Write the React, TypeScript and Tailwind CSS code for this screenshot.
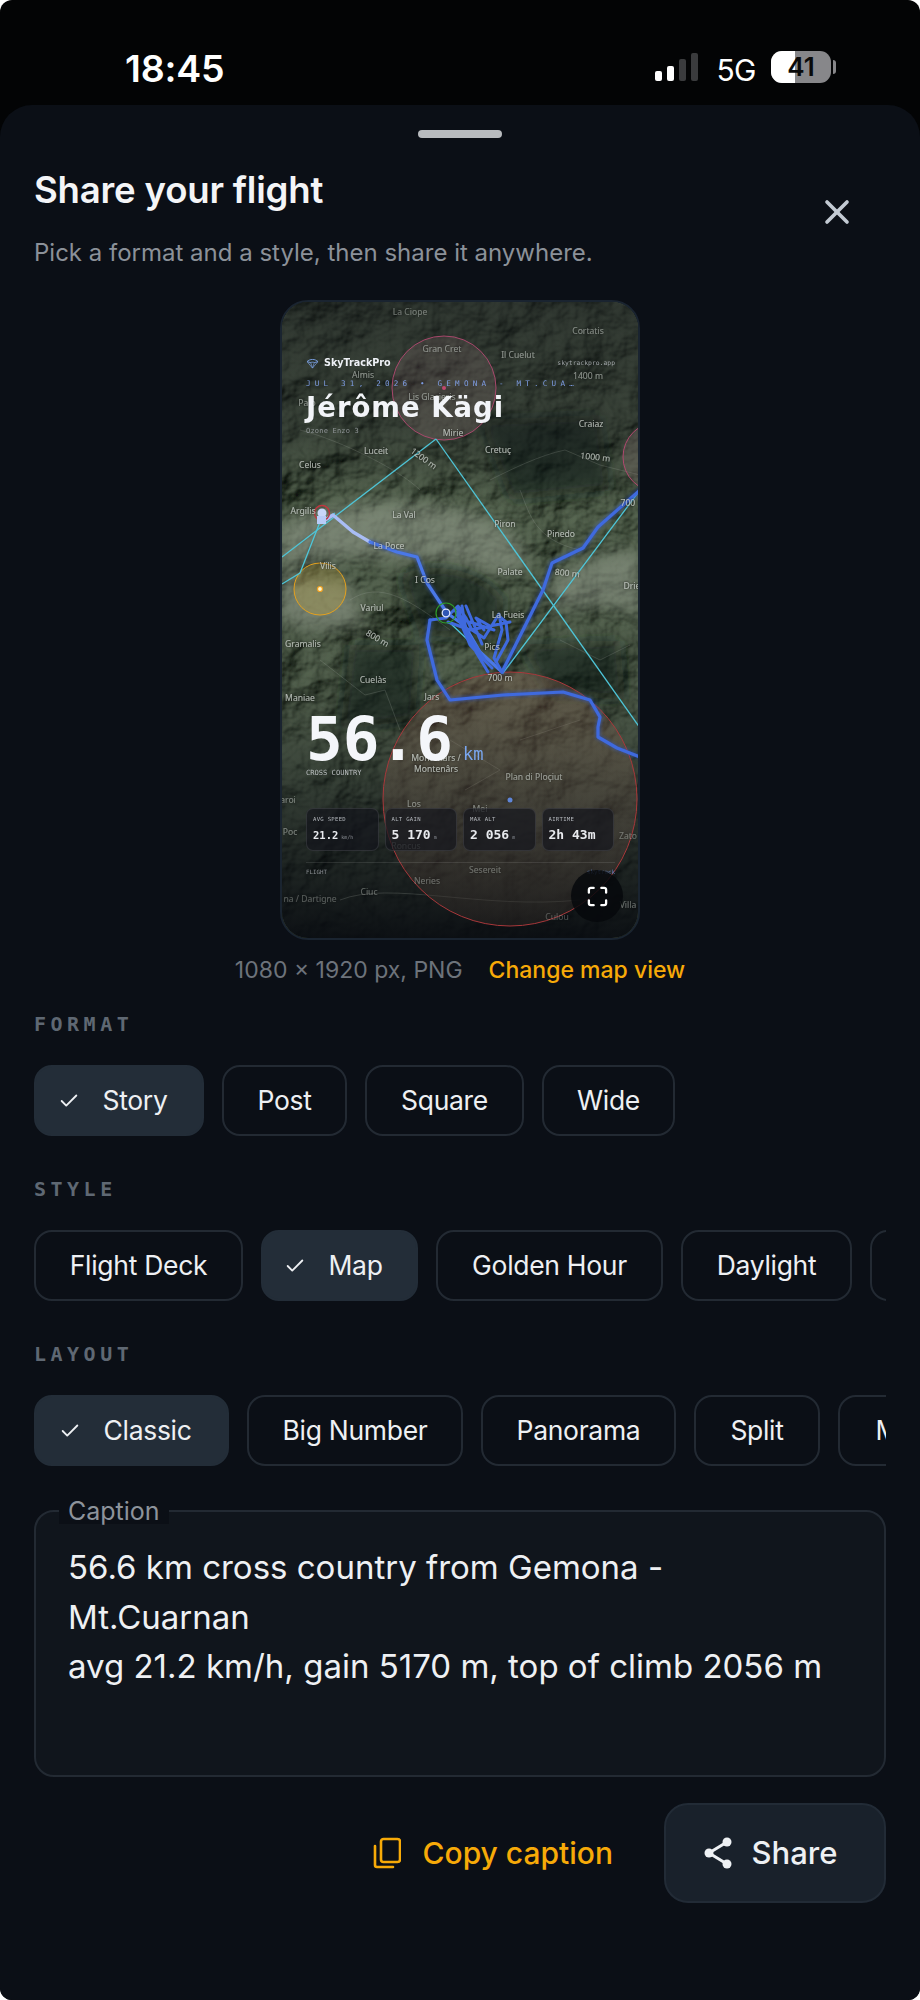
import { Check, Maximize, X } from "lucide-react";

const SANS = "font-['Inter','Liberation_Sans',sans-serif]";
const MONO = "font-['DejaVu_Sans_Mono','Liberation_Mono',monospace]";

type Label = { t: string; x: number; y: number; r?: number; o?: number };

// place names on the map preview (coords in the 360x640 map)
const labels: Label[] = [
  { t: "La Ciope", x: 130, y: 15, o: 0.45 },
  { t: "Cortatis", x: 308, y: 34, o: 0.55 },
  { t: "Gran Cret", x: 162, y: 52, o: 0.55 },
  { t: "Il Cuelut", x: 238, y: 58, o: 0.6 },
  { t: "Almis", x: 83, y: 78, o: 0.6 },
  { t: "1400 m", x: 308, y: 79, o: 0.6 },
  { t: "Palo", x: 27, y: 106, o: 0.6 },
  { t: "Lis Glacieris", x: 152, y: 100, o: 0.6 },
  { t: "Mirie", x: 173, y: 136 },
  { t: "Craiaz", x: 311, y: 127 },
  { t: "Luceit", x: 96, y: 154 },
  { t: "1200 m", x: 142, y: 161, r: 36 },
  { t: "Cretuç", x: 218, y: 153 },
  { t: "1000 m", x: 315, y: 160, r: 6 },
  { t: "Celus", x: 30, y: 168 },
  { t: "Argilis", x: 23, y: 214 },
  { t: "La Val", x: 124, y: 218 },
  { t: "Piron", x: 225, y: 227 },
  { t: "Pinedo", x: 281, y: 237 },
  { t: "La Poce", x: 109, y: 249 },
  { t: "Palate", x: 230, y: 275 },
  { t: "800 m", x: 287, y: 276, r: 6 },
  { t: "I Cos", x: 145, y: 283 },
  { t: "Vilis", x: 48, y: 269 },
  { t: "Varìul", x: 92, y: 311 },
  { t: "La Fueis", x: 228, y: 318 },
  { t: "Drie", x: 352, y: 289 },
  { t: "700 m", x: 353, y: 206 },
  { t: "Gramalis", x: 23, y: 347 },
  { t: "800 m", x: 96, y: 341, r: 30 },
  { t: "Pics", x: 212, y: 350 },
  { t: "Cuelàs", x: 93, y: 383 },
  { t: "Maniae", x: 20, y: 401 },
  { t: "Jars", x: 152, y: 400 },
  { t: "700 m", x: 220, y: 381 },
  { t: "Montenârs /", x: 156, y: 461 },
  { t: "Montenârs", x: 156, y: 472 },
  { t: "Plan di Ploçiut", x: 254, y: 480, o: 0.65 },
  { t: "Los", x: 134, y: 507, o: 0.55 },
  { t: "Mei", x: 200, y: 512, o: 0.55 },
  { t: "Poc", x: 10, y: 535, o: 0.5 },
  { t: "Roncus", x: 126, y: 549, o: 0.4 },
  { t: "Sesereit", x: 205, y: 573, o: 0.4 },
  { t: "Neries", x: 147, y: 584, o: 0.4 },
  { t: "Ciuc", x: 89, y: 595, o: 0.4 },
  { t: "na / Dartigne", x: 30, y: 602, o: 0.35 },
  { t: "Culou", x: 277, y: 620, o: 0.3 },
  { t: "Villa", x: 348, y: 608, o: 0.45 },
  { t: "Zato", x: 348, y: 539, o: 0.4 },
  { t: "aroi", x: 8, y: 503, o: 0.5 },
];

function MapDrawing() {
  return (
    <svg viewBox="0 0 360 640" className="block h-full w-full" aria-hidden="true">
      <defs>
        <filter id="hills" x="0" y="0" width="100%" height="100%">
          <feTurbulence type="fractalNoise" baseFrequency="0.013 0.015" numOctaves="5" seed="23" />
          <feDiffuseLighting surfaceScale="17" diffuseConstant="1.05" lightingColor="#98a291">
            <feDistantLight azimuth="225" elevation="50" />
          </feDiffuseLighting>
          <feComponentTransfer>
            <feFuncR type="gamma" exponent="1.7" amplitude="1" />
            <feFuncG type="gamma" exponent="1.6" amplitude="1" />
            <feFuncB type="gamma" exponent="1.7" amplitude="1" />
          </feComponentTransfer>
        </filter>
        <filter id="soft">
          <feGaussianBlur stdDeviation="8" />
        </filter>
        <filter id="glow">
          <feGaussianBlur stdDeviation="1.4" />
        </filter>
        <filter id="halo">
          <feDropShadow dx="0" dy="0" stdDeviation="0.8" floodColor="#111" floodOpacity="0.95" />
        </filter>
        <linearGradient id="shade" x1="0" y1="0" x2="0" y2="1">
          <stop offset="0" stopColor="#14161a" stopOpacity="0.62" />
          <stop offset="0.2" stopColor="#14161a" stopOpacity="0.48" />
          <stop offset="0.32" stopColor="#14161a" stopOpacity="0.12" />
          <stop offset="0.6" stopColor="#14161a" stopOpacity="0.18" />
          <stop offset="0.78" stopColor="#0c0f14" stopOpacity="0.55" />
          <stop offset="1" stopColor="#090c11" stopOpacity="0.96" />
        </linearGradient>
        <linearGradient id="zone" x1="0" y1="0" x2="0" y2="1">
          <stop offset="0" stopColor="#7a5a4c" stopOpacity="0.42" />
          <stop offset="0.55" stopColor="#6a564a" stopOpacity="0.34" />
          <stop offset="1" stopColor="#2a2522" stopOpacity="0.5" />
        </linearGradient>
      </defs>

      <rect width="360" height="640" fill="#252a25" />
      <rect width="360" height="640" filter="url(#hills)" opacity="0.85" />

      {/* pale ridges */}
      <g filter="url(#soft)" fill="#aeb8a6" opacity="0.5">
        <path d="M0 225 C50 205 110 195 160 205 S235 225 250 265 C215 285 190 262 150 262 S70 250 0 268Z" />
        <path d="M270 280 C300 262 330 250 360 250 L360 318 C330 300 300 310 270 310Z" />
        <path d="M0 270 L70 285 L85 325 L30 330 L0 320Z" />
      </g>
      <g filter="url(#soft)" fill="#0e1a12" opacity="0.6">
        <path d="M120 275 C160 260 200 270 225 300 L215 340 L140 335Z" />
        <path d="M70 345 L140 345 L135 420 L60 430Z" />
        <path d="M240 345 L340 340 L345 400 L270 395Z" />
        <path d="M200 120 L320 115 L330 190 L230 200Z" />
      </g>

      <rect width="360" height="640" fill="url(#shade)" />

      {/* contour lines */}
      <g fill="none" stroke="#aab0a8" strokeWidth="0.6" opacity="0.35">
        <path d="M20 130 C60 140 120 170 140 190 M210 180 C230 170 260 155 285 150 L320 165 L360 175" />
        <path d="M240 190 C250 215 255 240 300 250 M70 300 C100 280 130 300 170 330" />
        <path d="M40 360 L85 395 L105 390 L120 430 M240 440 L300 420 M170 440 L220 470 L185 490" />
        <path d="M280 340 L320 360 L350 345 M60 600 C110 580 200 610 300 600" />
      </g>

      {/* airspace circles */}
      <circle cx="164" cy="88" r="52" fill="#9a7a7c" fillOpacity="0.2" stroke="#a8486c" strokeWidth="1" />
      <circle cx="164" cy="88" r="2" fill="#c2476f" />
      <circle cx="378" cy="157" r="35" fill="#9a7a7c" fillOpacity="0.2" stroke="#b0486f" strokeWidth="1" />
      <circle cx="230" cy="499" r="127" fill="url(#zone)" stroke="#a8383b" strokeWidth="1" />
      <circle cx="230" cy="500" r="2.5" fill="#5f86d8" />
      <circle cx="40" cy="289" r="26" fill="#b8a040" fillOpacity="0.32" stroke="#e5a11e" strokeWidth="1" />
      <circle cx="40" cy="289" r="2.5" fill="#fff3c4" stroke="#f0a020" strokeWidth="1.2" />

      {/* task lines */}
      <g fill="none" stroke="#4ec5d8" strokeWidth="1.3">
        <path d="M156 139 L2 257" />
        <path d="M2 284 L20 273 L40 222 L55 213" />
        <path d="M156 139 L360 428" />
        <path d="M360 190 L223 373 L170 323" />
      </g>

      {/* track */}
      <g fill="none" strokeLinejoin="round" strokeLinecap="round">
        <path d="M90 242 L117 252 L137 257 L147 283 L167 313 M150 320 L147 340 L157 380 L170 400 L223 395 L283 392 L310 400 L320 417 L318 427 L318 437 L337 448 L360 457 M222 372 L243 330 L263 290 L272 263 L303 248 L318 227 L360 190" stroke="#2f55c8" strokeWidth="5" opacity="0.5" filter="url(#glow)" />
        <path d="M42 222 L53 215 L73 232 L90 242" stroke="#a9bdf5" strokeWidth="3.4" />
        <path d="M90 242 L117 252 L137 257 L147 283 L167 313 L185 326 L200 352 L222 372" stroke="#4a78e8" strokeWidth="3.2" />
        <path d="M150 320 L147 340 L157 380 L170 400 L223 395 L283 392 L310 400 L320 417 L318 427 L318 437 L337 448 L360 457" stroke="#3f6ade" strokeWidth="3.2" />
        <path d="M222 372 L243 330 L263 290 L272 263 L303 248 L318 227 L360 190" stroke="#3f6ade" strokeWidth="3.2" />
        <path d="M150 320 L166 318 L178 306 L186 318 L192 330 L204 338 L219 314 L222 330 L214 358 L222 372 M178 310 L196 352 L208 372 M186 306 L202 344 M168 322 L190 330 L230 322 M204 330 L196 318 L210 326 M176 312 L190 345 L212 368 M182 306 L186 330 L206 362 M219 316 L226 322 L228 340 L216 362 M190 322 L214 330" stroke="#3f6ade" strokeWidth="3" />
      </g>

      {/* markers */}
      <circle cx="42" cy="213" r="7.5" fill="none" stroke="#c0363f" strokeWidth="1.4" />
      <circle cx="42" cy="213" r="4.5" fill="#c9d6f8" />
      <rect x="37" y="216" width="9" height="8" fill="#b9cbf7" />
      <circle cx="166" cy="313" r="10" fill="none" stroke="#2f9a2a" strokeWidth="1.2" />
      <circle cx="166" cy="313" r="3.8" fill="#2f56b5" stroke="#dbe5ff" strokeWidth="1.3" />

      <g filter="url(#halo)" fontFamily="'Noto Sans',sans-serif" fontSize="8.6" fill="#c4cac4" textAnchor="middle">
        {labels.map((l, i) => (
          <text
            key={i}
            x={l.x}
            y={l.y}
            opacity={l.o ?? 0.85}
            transform={l.r ? `rotate(${l.r} ${l.x} ${l.y})` : undefined}
          >
            {l.t}
          </text>
        ))}
      </g>
    </svg>
  );
}

function Stat({ label, value, unit, small }: { label: string; value: string; unit?: string; small?: boolean }) {
  return (
    <div className={`flex h-[43px] w-[73px] flex-col rounded-[7px] border border-white/10 bg-[#14161c]/70 px-[6px] pt-[7px] ${MONO}`}>
      <span className="text-[5.6px] leading-[7px] tracking-[0.3px] text-[#b4b8bd]">{label}</span>
      <span className="mt-[5px] flex items-baseline gap-[3px] font-bold leading-[14px] text-[#e8eaee]">
        <span className={small ? "text-[10.5px]" : "text-[13px]"}>{value}</span>
        {unit && <span className="text-[5px] font-normal text-[#8b8f96]">{unit}</span>}
      </span>
    </div>
  );
}

function MapPreview() {
  return (
    <div className="relative h-[640px] w-[360px] overflow-hidden rounded-[28px] border-2 border-[#1a2430]">
      <div className="absolute inset-[-2px]">
        <MapDrawing />
      </div>

      {/* text printed on the share card */}
      <div className="absolute inset-[-2px] flex flex-col px-[26px] pt-[56px]">
        <div className="flex items-center justify-between">
          <div className="flex items-center gap-[5px]">
            <svg viewBox="0 0 14 12" className="h-[11px] w-[13px]" fill="none" stroke="#7ea4ea" strokeWidth="1">
              <path d="M1 4 C4 0.8 10 0.8 13 4 L9 5 C8 4.4 6 4.4 5 5Z" />
              <path d="M1.5 4.4 L7 11 L12.5 4.4 M5 5 L7 11 L9 5" strokeWidth="0.7" />
            </svg>
            <span className="font-['DejaVu_Sans',sans-serif] text-[9.6px] font-bold leading-[14px] text-[#eef1f6]">SkyTrackPro</span>
          </div>
          <span className={`${MONO} mr-[-1px] text-[6.4px] leading-[14px] text-[#9ea3a6]`}>skytrackpro.app</span>
        </div>
        <div className={`${MONO} mt-[9px] h-[10px] overflow-hidden whitespace-nowrap text-[7.6px] leading-[10px] tracking-[4.2px] text-[#7e9de4]`}>
          JUL 31, 2026 • GEMONA - MT.CUA…
        </div>
        <div className="mt-[2px] font-['DejaVu_Sans',sans-serif] text-[27.5px] font-bold leading-[32px] tracking-[1px] text-[#f2f4f8]">
          Jérôme Kägi
        </div>
        <div className={`${MONO} mt-[3px] text-[7px] leading-[10px] tracking-[0.2px] text-[#8f9496]`}>Ozone Enzo 3</div>

        <div className={`${MONO} mt-[274px] flex items-baseline font-bold text-[#f4f6fa]`}>
          <span className="text-[61px] leading-[58px]">56.6</span>
          <span className="ml-[10px] text-[17px] font-normal leading-none text-[#7aa7f0]">km</span>
        </div>
        <div className={`${MONO} text-[7.1px] leading-[10px] text-[#b9bdbf]`}>CROSS COUNTRY</div>

        <div className="mt-[30px] flex gap-[6px]">
          <Stat label="AVG SPEED" value="21.2" unit="km/h" small />
          <Stat label="ALT GAIN" value="5 170" unit="m" />
          <Stat label="MAX ALT" value="2 056" unit="m" />
          <Stat label="AIRTIME" value="2h 43m" />
        </div>

        <div className="mt-[11px] h-px w-[309px] bg-white/10" />
        <div className={`${MONO} mt-[5px] flex w-[309px] justify-between text-[5.8px] leading-[8px]`}>
          <span className="text-[#8b8f93]">FLIGHT</span>
          <span className="text-[#5f7fbe]">skytrack</span>
        </div>
      </div>

      <div className="absolute bottom-[16px] right-[15px] flex h-[52px] w-[52px] items-center justify-center rounded-full bg-[#06080c]/85">
        <Maximize size={23} strokeWidth={2.4} className="text-white" />
      </div>
    </div>
  );
}

function Chip({ label, width, on }: { label: string; width: string; on?: boolean }) {
  return (
    <div
      className={`flex h-[71px] shrink-0 items-center justify-center gap-[22px] rounded-[18px] border-2 text-[26.5px] tracking-[-0.3px] text-[#eef0f3] ${width} ${
        on ? "border-[#232d38] bg-[#232d38] pr-[12px]" : "border-[#232a33]"
      }`}
    >
      {on && <Check size={22} strokeWidth={2} className="shrink-0" />}
      <span className="whitespace-nowrap">{label}</span>
    </div>
  );
}

function SectionLabel({ children }: { children: string }) {
  return (
    <div className={`${MONO} text-[20px] font-bold leading-[26px] tracking-[4.5px] text-[#5f6873]`}>{children}</div>
  );
}

export default function App() {
  return (
    <div className={`h-[2000px] w-[920px] overflow-hidden rounded-[12px] bg-[#030405] ${SANS}`}>
      {/* Status bar */}
      <div className="flex h-[105px] justify-between pl-[125px] pr-[84px] pt-[47px] text-white">
        <span className="text-[37.5px] font-semibold leading-[44px] tracking-[-0.2px]">18:45</span>
        <div className="flex h-[44px] items-start pt-[4px]">
          <div className="mt-[2px] flex h-[28px] items-end gap-[5px]">
            <span className="h-[10px] w-[7px] rounded-[2px] bg-white" />
            <span className="h-[15px] w-[7px] rounded-[2px] bg-white" />
            <span className="h-[22px] w-[7px] rounded-[2px] bg-[#3a3b3d]" />
            <span className="h-[28px] w-[7px] rounded-[2px] bg-[#3a3b3d]" />
          </div>
          <span className="ml-[18px] text-[30px] font-normal leading-[38px] tracking-[-0.5px]">5G</span>
          <div className="ml-[15px] flex items-center gap-[2px]">
            <div className="relative flex h-[32px] w-[60px] items-center justify-center overflow-hidden rounded-[11px] bg-[#87878a]">
              <span className="absolute inset-y-0 left-0 w-[24px] bg-white" />
              <span className="relative text-[26px] font-semibold leading-none text-[#0a0a0a]">41</span>
            </div>
            <span className="h-[14px] w-[3px] rounded-r-[3px] bg-[#87878a]" />
          </div>
        </div>
      </div>

      {/* Sheet */}
      <div className="h-[1895px] rounded-t-[32px] bg-[#0b0f16] px-[34px]">
        <div className="flex justify-center pt-[25px]">
          <div className="h-[8px] w-[84px] rounded-full bg-[#b9bcbf]" />
        </div>

        <div className="mt-[30px] flex justify-between">
          <div>
            <h1 className="text-[36.6px] font-semibold leading-[44px] tracking-[-0.2px] text-[#f4f5f7]">Share your flight</h1>
            <p className="mt-[25px] text-[24px] leading-[32px] text-[#8b9199]">Pick a format and a style, then share it anywhere.</p>
          </div>
          <X size={40} strokeWidth={2.2} className="mr-[29px] mt-[24px] text-[#c3cad3]" />
        </div>

        <div className="mt-[31px] flex justify-center">
          <MapPreview />
        </div>

        <div className="mt-[15px] flex justify-center gap-[26px] text-[23px] leading-[30px]">
          <span className="text-[#6d737b]">1080 × 1920 px, PNG</span>
          <span className="font-medium text-[#f7aa08]">Change map view</span>
        </div>

        <div className="mt-[26px]">
          <SectionLabel>FORMAT</SectionLabel>
          <div className="mt-[28px] flex gap-[18px]">
            <Chip label="Story" width="w-[170px]" on />
            <Chip label="Post" width="w-[125px]" />
            <Chip label="Square" width="w-[159px]" />
            <Chip label="Wide" width="w-[133px]" />
          </div>
        </div>

        <div className="mt-[40px]">
          <SectionLabel>STYLE</SectionLabel>
          <div className="mt-[28px] flex gap-[18px] overflow-hidden">
            <Chip label="Flight Deck" width="w-[209px]" />
            <Chip label="Map" width="w-[157px]" on />
            <Chip label="Golden Hour" width="w-[227px]" />
            <Chip label="Daylight" width="w-[171px]" />
            <Chip label="Night" width="w-[140px]" />
          </div>
        </div>

        <div className="mt-[40px]">
          <SectionLabel>LAYOUT</SectionLabel>
          <div className="mt-[28px] flex gap-[18px] overflow-hidden">
            <Chip label="Classic" width="w-[195px]" on />
            <Chip label="Big Number" width="w-[216px]" />
            <Chip label="Panorama" width="w-[195px]" />
            <Chip label="Split" width="w-[126px]" />
            <Chip label="Minimal" width="w-[170px]" />
          </div>
        </div>

        {/* Caption */}
        <div className="relative mt-[44px] h-[267px] rounded-[20px] border-2 border-[#232a33] bg-[#10151c] px-[32px] pt-[31px]">
          <span className="absolute left-[23px] top-[-14px] bg-[#0b0f16] px-[9px] text-[25px] leading-[26px] text-[#8d939b]">Caption</span>
          <p className="whitespace-nowrap text-[33px] leading-[49.5px] text-[#eef0f3]">
            56.6 km cross country from Gemona -
            <br />
            Mt.Cuarnan
            <br />
            avg 21.2 km/h, gain 5170 m, top of climb 2056 m
          </p>
        </div>

        {/* Actions */}
        <div className="mt-[26px] flex items-center justify-end">
          <svg viewBox="0 0 28 32" className="h-[32px] w-[28px]" fill="none" stroke="#f7aa08" strokeWidth="2.6" strokeLinecap="round">
            <rect x="8" y="2" width="19" height="23" rx="2.5" />
            <path d="M2 9 V28 a2 2 0 0 0 2 2 H20" />
          </svg>
          <span className="ml-[22px] text-[30px] font-medium text-[#f7aa08]">Copy caption</span>
          <div className="ml-[51px] flex h-[100px] w-[222px] items-center justify-center gap-[19px] rounded-[24px] border-2 border-[#222b36] bg-[#19212b] pr-[10px]">
            <svg viewBox="0 0 30 32" className="h-[32px] w-[30px]" fill="#eef1f4" stroke="#eef1f4" strokeWidth="3">
              <path d="M24 5 L6 16 L24 27" fill="none" />
              <circle cx="24" cy="5" r="4.5" stroke="none" />
              <circle cx="6" cy="16" r="4.5" stroke="none" />
              <circle cx="24" cy="27" r="4.5" stroke="none" />
            </svg>
            <span className="text-[31px] font-medium text-[#eef1f4]">Share</span>
          </div>
        </div>
      </div>
    </div>
  );
}
